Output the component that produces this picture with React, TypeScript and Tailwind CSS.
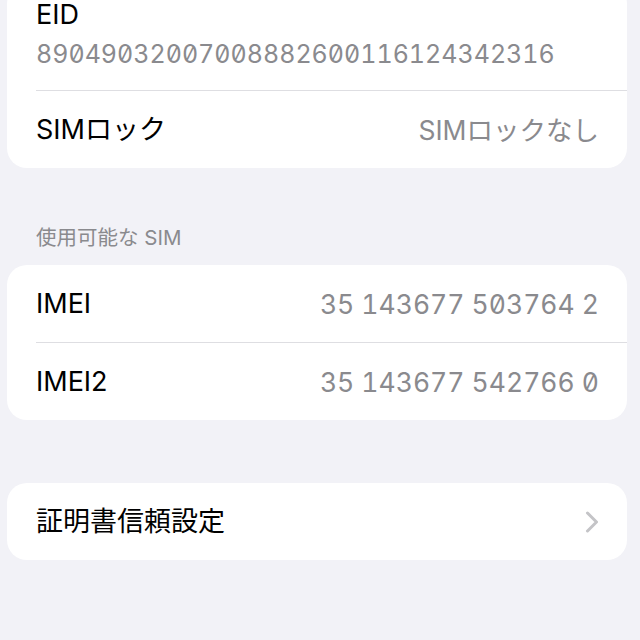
const Row = ({
  label,
  value,
  chevron,
}: {
  label: string;
  value?: string;
  chevron?: boolean;
}) => {
  return (
    <div className="flex h-[77px] items-center justify-between pl-[29px] pr-[28px]">
      <span className="text-[27px] leading-[34px] text-black">{label}</span>
      {value && (
        <span className="text-[26.5px] leading-[34px] text-[#8a8a8e] tabular-nums slashed-zero">
          {value}
        </span>
      )}
      {chevron && (
        <svg width="14" height="22" viewBox="0 0 14 22" fill="none">
          <path
            d="M2.5 2 L11.5 11 L2.5 20"
            stroke="#c4c4c7"
            strokeWidth="3"
            strokeLinecap="round"
            strokeLinejoin="round"
          />
        </svg>
      )}
    </div>
  );
};

const Divider = () => <div className="ml-[29px] h-px bg-[#dedee2]" />;

export default function App() {
  return (
    <div className="flex h-[640px] flex-col overflow-hidden bg-[#f2f2f7] pl-[7px] pr-[13px] font-['Inter','Noto_Sans_CJK_JP',sans-serif]">
      <div className="-mt-[16px] rounded-[20px] bg-white">
        <div className="flex flex-col pl-[29px] pr-[28px] pt-[16px] pb-[19px]">
          <span className="text-[27px] leading-[30px] text-black">EID</span>
          <span className="mt-[7px] text-[25px] leading-[34px] text-[#8a8a8e] tabular-nums slashed-zero">
            89049032007008882600116124342316
          </span>
        </div>
        <Divider />
        <Row label="SIMロック" value="SIMロックなし" />
      </div>

      <div className="mt-[58px] mb-[15px] h-[24px] pl-[29px] text-[20.5px] leading-[24px] text-[#8a8a8e]">
        使用可能な SIM
      </div>

      <div className="rounded-[20px] bg-white">
        <Row label="IMEI" value="35 143677 503764 2" />
        <Divider />
        <Row label="IMEI2" value="35 143677 542766 0" />
      </div>

      <div className="mt-[63px] rounded-[20px] bg-white">
        <Row label="証明書信頼設定" chevron />
      </div>
    </div>
  );
}
